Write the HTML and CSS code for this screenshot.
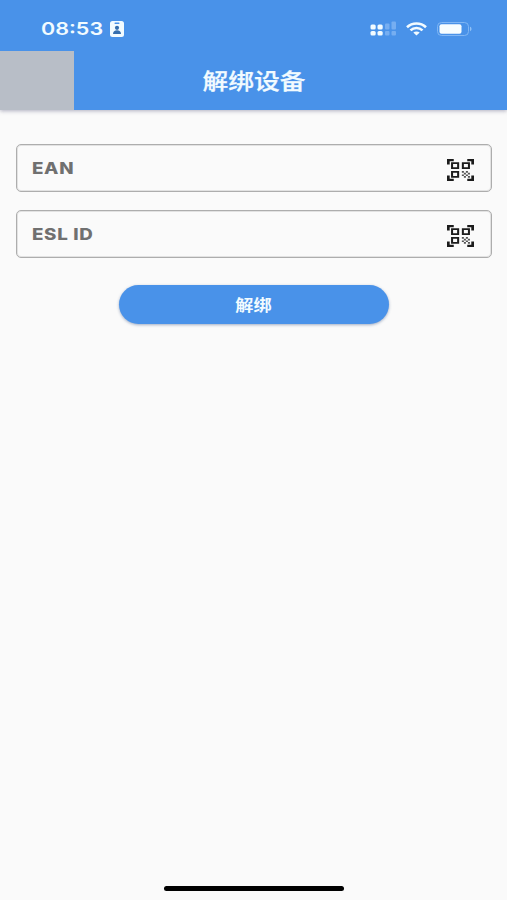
FILE: index.html
```html
<!DOCTYPE html>
<html lang="zh-CN">
<head>
<meta charset="utf-8">
<title>解绑设备</title>
<link rel="stylesheet" href="styles.css">
</head>
<body>
<svg class="defs" width="0" height="0" aria-hidden="true">
  <symbol id="scan" viewBox="2 2 20 20" preserveAspectRatio="none">
    <path d="M9.5 6.5v3h-3v-3h3M11 5H5v6h6V5zm-1.5 9.5v3h-3v-3h3M11 13H5v6h6v-6zm6.5-6.5v3h-3v-3h3M19 5h-6v6h6V5zM22 7h-2V4h-3V2h5v5zm0 15v-5h-2v3h-3v2h5zM2 22h5v-2H4v-3H2v5zM2 2v5h2V4h3V2H2z"/>
    <path opacity=".75" d="M13 13h1.500v1.500H13V13zm1.500 1.500H16V16h-1.500v-1.500zM16 13h1.500v1.500H16V13zm-3 3h1.500v1.500H13V16zm1.500 1.500H16V19h-1.500v-1.500zM16 16h1.500v1.500H16V16zm1.500-1.500H19V16h-1.500v-1.500zm0 3H19V19h-1.500v-1.500z"/>
  </symbol>
</svg>
<div class="screen">
  <header class="header">
    <div class="status">
      <span class="time">08:53</span>
      <svg class="badge" width="14" height="16" viewBox="0 0 14 16">
        <rect width="14" height="16" rx="2.5" fill="#f2fbff"/>
        <rect x="4.5" y="1.6" width="5" height="1.3" rx=".6" fill="#4992e9"/>
        <circle cx="7" cy="6.8" r="2.1" fill="#356eae"/>
        <path d="M3 13c0-2.600 1.600-3.700 4-3.700s4 1.100 4 3.700z" fill="#356eae"/>
      </svg>
      <svg class="signal" width="26" height="15" viewBox="0 0 26 15">
        <g fill="#f2fbff">
          <rect x="0.500" y="3.500" width="5.200" height="5" rx="1.500"/>
          <rect x="7.500" y="3.500" width="5.200" height="5" rx="1.500"/>
          <rect x="0.500" y="10" width="5.200" height="4.500" rx="1.500"/>
          <rect x="7.500" y="10" width="5.200" height="4.500" rx="1.500"/>
        </g>
        <g fill="#76aef1">
          <rect x="15" y="2.500" width="4.500" height="6" rx="1"/>
          <rect x="21.500" y="0.500" width="4.500" height="8" rx="1"/>
          <rect x="15" y="10" width="4.500" height="4.500" rx="1"/>
          <rect x="21.500" y="10" width="4.500" height="4.500" rx="1"/>
        </g>
      </svg>
      <svg class="wifi" width="21" height="14" viewBox="0 0 21 14" fill="none" stroke="#f2fbff" stroke-width="2.600">
        <path d="M1 5.200C6.300.2 14.700.2 20 5.200"/>
        <path d="M4.500 8.400c3.400-3.200 8.600-3.200 12 0"/>
        <path d="M7.300 10.600c1.800-1.600 4.600-1.600 6.400 0L10.500 13.600z" fill="#f2fbff" stroke="none"/>
      </svg>
      <svg class="battery" width="35" height="14" viewBox="0 0 35 14">
        <rect x=".5" y=".5" width="31" height="13" rx="4" fill="none" stroke="#80b6f4"/>
        <rect x="2.500" y="2.200" width="22" height="9.600" rx="2" fill="#f7fdff"/>
        <path d="M33 4.800c2 .6 2 3.800 0 4.400z" fill="#8fc0f6"/>
      </svg>
    </div>
    <div class="bar">
      <div class="back"></div>
      <h1 class="title"><span class="wide">解绑设备</span></h1>
    </div>
  </header>
  <main class="form">
    <div class="field"><span class="label">EAN</span><svg class="scan"><use href="#scan"/></svg></div>
    <div class="field"><span class="label">ESL ID</span><svg class="scan"><use href="#scan"/></svg></div>
    <button class="submit"><span class="wide">解绑</span></button>
  </main>
  <div class="home"></div>
</div>
</body>
</html>
```

FILE: styles.css
```css
* { box-sizing: border-box; }

body {
  margin: 0;
  background: #fafafa;
  font-family: Inter, "Noto Sans CJK SC", sans-serif;
}

.defs { display: none; }

.screen {
  display: flex;
  flex-direction: column;
  height: 900px;
  overflow: hidden;
}

.header {
  height: 110px;
  background: #4992e9;
  box-shadow: 0 1px 4px rgba(70, 70, 110, .42);
}

.status {
  display: flex;
  align-items: center;
  height: 51px;
  padding: 6px 35px 0 41px;
}

.time {
  width: 62px;
  color: #f2fbff;
  font-size: 17.5px;
  font-weight: 600;
  line-height: 20px;
  white-space: nowrap;
  transform: scaleX(1.23);
  transform-origin: left;
}

.badge { margin-left: 7px; }
.signal { margin-left: auto; }
.wifi { margin-left: 10px; }
.battery { margin-left: 10px; }

.bar {
  display: grid;
  grid-template-columns: 74px 1fr 72px;
  grid-template-rows: 59px;
}

.back { background: #b8bec7; }

.title {
  margin: 0;
  color: #f2fbff;
  font-size: 22px;
  font-weight: 500;
  line-height: 61px;
  text-align: center;
  -webkit-text-stroke: .25px #f2fbff;
}

.wide {
  display: inline-block;
  transform: scaleX(1.17);
}

.form {
  display: flex;
  flex: 1;
  flex-direction: column;
  gap: 18px;
  padding: 34px 15px 0 16px;
}

.field {
  display: flex;
  align-items: center;
  justify-content: space-between;
  height: 48px;
  padding: 0 17px 0 15px;
  border: 1px solid #adadad;
  border-radius: 5px;
  box-shadow: inset 0 0 0 1px #e2e2e2;
}

.label {
  color: #707070;
  font-size: 16px;
  font-weight: 800;
  letter-spacing: .6px;
  transform: scaleX(1.17);
  transform-origin: left;
}

.scan {
  width: 27px;
  height: 22px;
  margin-top: 4px;
  fill: #1c1c1c;
}

.submit {
  align-self: center;
  width: 270px;
  height: 39px;
  margin-top: 9px;
  padding: 0;
  border: 0;
  border-radius: 20px;
  background: #4992e9;
  box-shadow: 0 1px 3px rgba(50, 80, 130, .45);
  color: #f2fbff;
  font: 700 15.5px/39px "Noto Sans CJK SC", sans-serif;
}

.home {
  align-self: center;
  width: 180px;
  height: 5px;
  margin: 0 0 9px 1px;
  border-radius: 3px;
  background: #000;
}
```
